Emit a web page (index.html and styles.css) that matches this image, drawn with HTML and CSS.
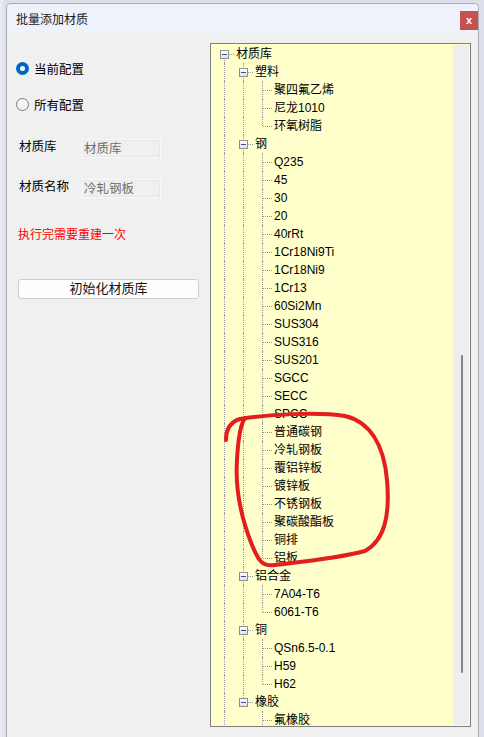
FILE: index.html
```html
<!DOCTYPE html>
<html lang="zh-CN">
<head>
<meta charset="utf-8">
<title>批量添加材质</title>
<link rel="stylesheet" href="styles.css">
</head>
<body>
<div class="window">
  <div class="titlebar">
    <span class="title">批量添加材质</span>
    <span class="close">x</span>
  </div>
  <div class="content">
    <div class="left">
      <label class="radio-row first"><span class="radio checked"></span><span>当前配置</span></label>
      <label class="radio-row second"><span class="radio"></span><span>所有配置</span></label>
      <div class="field f1"><span class="flabel">材质库</span><span class="input">材质库</span></div>
      <div class="field f2"><span class="flabel">材质名称</span><span class="input">冷轧钢板</span></div>
      <div class="warn">执行完需要重建一次</div>
      <div class="btn">初始化材质库</div>
    </div>
    <div class="tree">
      <div class="list">
        <div class="row"><span class="g n r"><i class="box"></i></span><span class="t">材质库</span></div>
        <div class="row"><span class="g v"></span><span class="g n m"><i class="box"></i></span><span class="t">塑料</span></div>
        <div class="row"><span class="g v"></span><span class="g v"></span><span class="g n m"></span><span class="t">聚四氟乙烯</span></div>
        <div class="row"><span class="g v"></span><span class="g v"></span><span class="g n m"></span><span class="t">尼龙1010</span></div>
        <div class="row"><span class="g v"></span><span class="g v"></span><span class="g n"></span><span class="t">环氧树脂</span></div>
        <div class="row"><span class="g v"></span><span class="g n m"><i class="box"></i></span><span class="t">钢</span></div>
        <div class="row"><span class="g v"></span><span class="g v"></span><span class="g n m"></span><span class="t">Q235</span></div>
        <div class="row"><span class="g v"></span><span class="g v"></span><span class="g n m"></span><span class="t">45</span></div>
        <div class="row"><span class="g v"></span><span class="g v"></span><span class="g n m"></span><span class="t">30</span></div>
        <div class="row"><span class="g v"></span><span class="g v"></span><span class="g n m"></span><span class="t">20</span></div>
        <div class="row"><span class="g v"></span><span class="g v"></span><span class="g n m"></span><span class="t">40rRt</span></div>
        <div class="row"><span class="g v"></span><span class="g v"></span><span class="g n m"></span><span class="t">1Cr18Ni9Ti</span></div>
        <div class="row"><span class="g v"></span><span class="g v"></span><span class="g n m"></span><span class="t">1Cr18Ni9</span></div>
        <div class="row"><span class="g v"></span><span class="g v"></span><span class="g n m"></span><span class="t">1Cr13</span></div>
        <div class="row"><span class="g v"></span><span class="g v"></span><span class="g n m"></span><span class="t">60Si2Mn</span></div>
        <div class="row"><span class="g v"></span><span class="g v"></span><span class="g n m"></span><span class="t">SUS304</span></div>
        <div class="row"><span class="g v"></span><span class="g v"></span><span class="g n m"></span><span class="t">SUS316</span></div>
        <div class="row"><span class="g v"></span><span class="g v"></span><span class="g n m"></span><span class="t">SUS201</span></div>
        <div class="row"><span class="g v"></span><span class="g v"></span><span class="g n m"></span><span class="t">SGCC</span></div>
        <div class="row"><span class="g v"></span><span class="g v"></span><span class="g n m"></span><span class="t">SECC</span></div>
        <div class="row"><span class="g v"></span><span class="g v"></span><span class="g n m"></span><span class="t">SPCC</span></div>
        <div class="row"><span class="g v"></span><span class="g v"></span><span class="g n m"></span><span class="t">普通碳钢</span></div>
        <div class="row"><span class="g v"></span><span class="g v"></span><span class="g n m"></span><span class="t">冷轧钢板</span></div>
        <div class="row"><span class="g v"></span><span class="g v"></span><span class="g n m"></span><span class="t">覆铝锌板</span></div>
        <div class="row"><span class="g v"></span><span class="g v"></span><span class="g n m"></span><span class="t">镀锌板</span></div>
        <div class="row"><span class="g v"></span><span class="g v"></span><span class="g n m"></span><span class="t">不锈钢板</span></div>
        <div class="row"><span class="g v"></span><span class="g v"></span><span class="g n m"></span><span class="t">聚碳酸酯板</span></div>
        <div class="row"><span class="g v"></span><span class="g v"></span><span class="g n m"></span><span class="t">铜排</span></div>
        <div class="row"><span class="g v"></span><span class="g v"></span><span class="g n"></span><span class="t">铝板</span></div>
        <div class="row"><span class="g v"></span><span class="g n m"><i class="box"></i></span><span class="t">铝合金</span></div>
        <div class="row"><span class="g v"></span><span class="g v"></span><span class="g n m"></span><span class="t">7A04-T6</span></div>
        <div class="row"><span class="g v"></span><span class="g v"></span><span class="g n"></span><span class="t">6061-T6</span></div>
        <div class="row"><span class="g v"></span><span class="g n m"><i class="box"></i></span><span class="t">铜</span></div>
        <div class="row"><span class="g v"></span><span class="g v"></span><span class="g n m"></span><span class="t">QSn6.5-0.1</span></div>
        <div class="row"><span class="g v"></span><span class="g v"></span><span class="g n m"></span><span class="t">H59</span></div>
        <div class="row"><span class="g v"></span><span class="g v"></span><span class="g n"></span><span class="t">H62</span></div>
        <div class="row"><span class="g v"></span><span class="g n"><i class="box"></i></span><span class="t">橡胶</span></div>
        <div class="row"><span class="g v"></span><span class="g"></span><span class="g n m"></span><span class="t">氟橡胶</span></div>
      </div>
      <div class="scrollbar"><span class="thumb"></span></div>
    </div>
  </div>
</div>
<svg class="scribble" width="484" height="737" viewBox="0 0 484 737" xmlns="http://www.w3.org/2000/svg">
  <path d="M226 440 C226 430 230 422 240 419 C270 414 320 412 345 416 C370 422 384 445 387 480 C390 515 385 540 365 551 C340 558 300 562 275 565 C262 567 258 560 252 545 C242 520 235 490 237 460 C238 440 240 425 245 418" fill="none" stroke="#e41d1d" stroke-width="4" stroke-linecap="round" stroke-linejoin="round"/>
</svg>
</body>
</html>
```

FILE: styles.css
```css
html, body {
  margin: 0;
  padding: 0;
}

body {
  width: 484px;
  height: 737px;
  overflow: hidden;
  background: linear-gradient(90deg, #eceef3 0px, #dcdfe9 6px, #dcdfe9 100%);
  font-family: "Liberation Sans", "Noto Sans CJK SC", sans-serif;
  color: #000;
  position: relative;
}

.window {
  margin: 3px 5px 0 6px;
  border: 1px solid #a8acb4;
  border-bottom: none;
  border-radius: 5px 5px 0 0;
  background: #f0f0f0;
  height: 760px;
  overflow: hidden;
}

.titlebar {
  height: 29px;
  background: #eef2fa;
  display: flex;
  justify-content: space-between;
  align-items: center;
  padding-left: 9px;
  border-radius: 4px 4px 0 0;
}

.title {
  font-size: 12px;
  color: #1a1a1a;
}

.close {
  align-self: flex-start;
  margin-top: 7px;
  width: 18px;
  height: 19px;
  background: #c75050;
  color: #fff;
  font-size: 11px;
  font-weight: bold;
  line-height: 18px;
  text-align: center;
}

.content {
  display: flex;
  padding-top: 10px;
}

.left {
  width: 203px;
  flex: none;
  display: flex;
  flex-direction: column;
  font-size: 12.5px;
}

.radio-row {
  height: 20px;
  display: flex;
  align-items: center;
  padding-left: 9px;
  gap: 5px;
}

.radio-row.first { margin-top: 15px; }
.radio-row.second { margin-top: 16px; }

.radio {
  width: 13px;
  height: 13px;
  box-sizing: border-box;
  border-radius: 50%;
  border: 1px solid #7a7a7a;
  background: #f4f4f4;
  position: relative;
}

.radio.checked {
  border: none;
  background: #0067c0;
}

.radio.checked::after {
  content: "";
  position: absolute;
  left: 4px;
  top: 4px;
  width: 5px;
  height: 5px;
  border-radius: 50%;
  background: #fff;
}

.field {
  height: 19px;
  display: flex;
  align-items: flex-start;
  padding-left: 12px;
}

.field.f1 { margin-top: 25px; }
.field.f2 { margin-top: 21px; }

.flabel {
  width: 63px;
  flex: none;
  line-height: 16px;
}

.input {
  width: 79px;
  height: 19px;
  box-sizing: border-box;
  border: 1px solid #fafafa;
  outline: 1px solid #e6e6e6;
  outline-offset: -2px;
  background: #f0f0f0;
  color: #6d6d6d;
  padding-left: 1px;
  line-height: 18px;
  font-size: 12.5px;
}

.warn {
  margin-top: 28px;
  height: 18px;
  line-height: 18px;
  padding-left: 11px;
  color: #ff0000;
  font-size: 12px;
}

.btn {
  margin-top: 35px;
  margin-left: 11px;
  width: 181px;
  height: 20px;
  box-sizing: border-box;
  border: 1px solid #cfcfcf;
  border-radius: 3px;
  background: #fdfdfd;
  text-align: center;
  font-size: 13px;
  line-height: 18px;
  color: #111;
}

.tree {
  width: 261px;
  height: 684px;
  box-sizing: border-box;
  border: 1px solid #7f7f7f;
  background: #ffffcc;
  padding: 1px;
  display: flex;
  overflow: hidden;
}

.list {
  flex: 1;
  padding-left: 3px;
  overflow: hidden;
  font-size: 12px;
}

.row {
  height: 18px;
  display: flex;
  align-items: center;
}

.g {
  width: 19px;
  height: 18px;
  flex: none;
  position: relative;
}

.g.v::before,
.g.n::before {
  content: "";
  position: absolute;
  left: 9px;
  top: 0;
  height: 9px;
  border-left: 1px dotted #999;
}

.g.v::before {
  height: auto;
  bottom: 0;
}

.g.n.m::before {
  height: auto;
  bottom: 0;
}

.g.n.r::before {
  top: 9px;
  height: auto;
  bottom: 0;
}

.g.n::after {
  content: "";
  position: absolute;
  left: 10px;
  top: 9px;
  width: 9px;
  border-top: 1px dotted #999;
}

.box {
  position: absolute;
  left: 5px;
  top: 5px;
  width: 9px;
  height: 9px;
  box-sizing: border-box;
  border: 1px solid #8f8f8f;
  background: linear-gradient(#ffffff, #e4e4e4);
  z-index: 1;
}

.box::after {
  content: "";
  position: absolute;
  left: 1px;
  top: 3px;
  width: 5px;
  height: 1px;
  background: #3d4f9a;
}

.t {
  padding-left: 2px;
  padding-top: 1px;
  line-height: 17px;
  height: 18px;
  box-sizing: border-box;
  white-space: nowrap;
}

.scrollbar {
  width: 16px;
  flex: none;
  background: #eeeeee;
  position: relative;
}

.thumb {
  position: absolute;
  left: 8px;
  top: 310px;
  width: 2px;
  height: 318px;
  border-radius: 1px;
  background: #858585;
}

.scribble {
  position: absolute;
  left: 0;
  top: 0;
  pointer-events: none;
}
```
